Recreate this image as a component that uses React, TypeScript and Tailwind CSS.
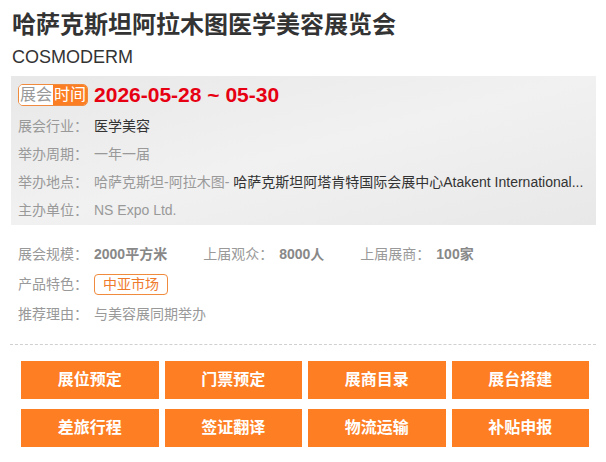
const font = "font-['Liberation_Sans','Noto_Sans_CJK_SC',sans-serif]"

const infoRows = [
  { label: '展会行业：', value: <span className="text-[#333]">医学美容</span> },
  { label: '举办周期：', value: <span className="text-[#999]">一年一届</span> },
  {
    label: '举办地点：',
    value: (
      <span className="whitespace-nowrap">
        <span className="text-[#999]">哈萨克斯坦-阿拉木图- </span>
        <span className="text-[#333]">哈萨克斯坦阿塔肯特国际会展中心Atakent International...</span>
      </span>
    ),
  },
  { label: '主办单位：', value: <span className="text-[#999]">NS Expo Ltd.</span> },
]

const stats = [
  { label: '展会规模：', value: '2000平方米' },
  { label: '上届观众：', value: '8000人' },
  { label: '上届展商：', value: '100家' },
]

const actions = ['展位预定', '门票预定', '展商目录', '展台搭建', '差旅行程', '签证翻译', '物流运输', '补贴申报']

export default function App() {
  return (
    <div className={`${font} w-[606px] h-[462px] bg-white overflow-hidden`}>
      <div className="pl-3 pt-[9px]">
        <h1 className="text-[24px] leading-[32px] font-bold text-[#333]">哈萨克斯坦阿拉木图医学美容展览会</h1>
        <p className="text-[18px] leading-[24px] text-[#333] mt-[4px]">COSMODERM</p>
      </div>

      <div className="mx-[11px] mt-[7px] w-[585px] pl-[7px] pr-[11px] pt-[8px] pb-[1px] bg-gradient-to-br from-[#e8e8e8] via-[#f1f1f1] to-[#e8e8e8]">
        <div className="flex items-center h-[22px]">
          <div className="flex h-[22px] border border-[#f08a3c] rounded-[5px] overflow-hidden text-[16px] leading-[20px]">
            <span className="bg-white text-[#999] px-[1px]">展会</span>
            <span className="bg-[#fb7e24] text-white px-[1px]">时间</span>
          </div>
          <span className="ml-[6px] text-[21px] font-bold text-[#e60012] leading-[22px]">2026-05-28 ~ 05-30</span>
        </div>
        <div className="mt-[6px]">
          {infoRows.map((r) => (
            <div key={r.label} className="flex h-[28px] items-center text-[14px]">
              <span className="w-[76px] shrink-0 text-[#999]">{r.label}</span>
              <div className="min-w-0 flex-1">{r.value}</div>
            </div>
          ))}
        </div>
      </div>

      <div className="px-[18px] pt-[14px] text-[14px]">
        <div className="flex h-[30px] items-center gap-[36px]">
          {stats.map((s) => (
            <div key={s.label} className="flex items-center">
              <span className="w-[76px] text-[#999]">{s.label}</span>
              <span className="font-bold text-[#888]">{s.value}</span>
            </div>
          ))}
        </div>
        <div className="flex h-[30px] items-center">
          <span className="w-[76px] text-[#999]">产品特色：</span>
          <span className="h-[21px] px-[8px] border border-[#f08a3c] rounded-[4px] text-[#f07a2c] leading-[19px]">中亚市场</span>
        </div>
        <div className="flex h-[31px] items-center">
          <span className="w-[76px] text-[#999]">推荐理由：</span>
          <span className="text-[#999]">与美容展同期举办</span>
        </div>
      </div>

      <div className="mx-[10px] mt-[14px] border-t border-dashed border-[#d0d0d0]" />

      <div className="grid grid-cols-4 gap-x-[6px] gap-y-[10px] ml-[21px] w-[568px] mt-[16px]">
        {actions.map((a) => (
          <button key={a} className="h-[38px] bg-[#fd7e23] text-white text-[16px] font-bold">
            {a}
          </button>
        ))}
      </div>
    </div>
  )
}
